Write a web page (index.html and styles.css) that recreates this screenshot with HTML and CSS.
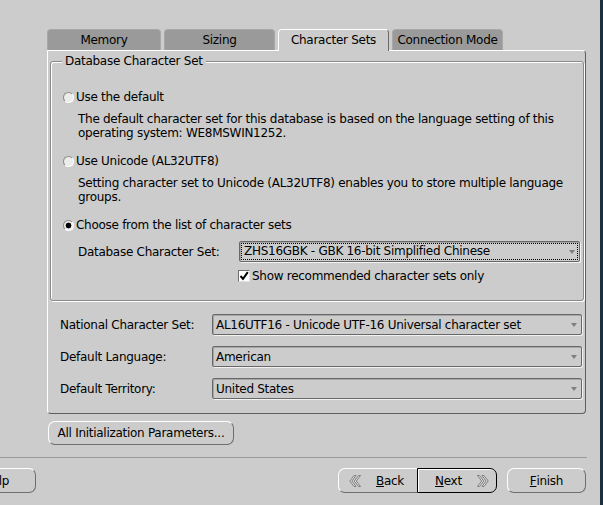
FILE: index.html
```html
<!DOCTYPE html>
<html>
<head>
<meta charset="utf-8">
<link rel="stylesheet" href="styles.css">
</head>
<body>
<div class="screen">
  <div class="window">
    <div class="tabs">
      <div class="tab tab-wide">Memory</div>
      <div class="tab">Sizing</div>
      <div class="tab active">Character Sets</div>
      <div class="tab">Connection Mode</div>
    </div>
    <div class="panel">
      <div class="group">
        <div class="group-title">Database Character Set</div>
        <div class="option opt-first"><span class="radio"></span>Use the default</div>
        <p class="desc">The default character set for this database is based on the language setting of this<br>operating system: WE8MSWIN1252.</p>
        <div class="option"><span class="radio"></span>Use Unicode (AL32UTF8)</div>
        <p class="desc">Setting character set to Unicode (AL32UTF8) enables you to store multiple language<br>groups.</p>
        <div class="option"><span class="radio checked"></span>Choose from the list of character sets</div>
        <div class="field db-field">
          <span class="field-label db-label">Database Character Set:</span>
          <div class="combo db-combo"><div class="focus-ring"><span class="combo-text">ZHS16GBK - GBK 16-bit Simplified Chinese</span><span class="arrow"></span></div></div>
        </div>
        <div class="check-row">
          <span class="checkbox"><svg width="10" height="10" viewBox="0 0 10 10"><path d="M1.5 5 L4 7.8 L8.8 1.2" stroke="#000" stroke-width="2" fill="none"/></svg></span>Show recommended character sets only
        </div>
      </div>
      <div class="form">
        <div class="field">
          <span class="field-label">National Character Set:</span>
          <div class="combo"><span class="combo-text">AL16UTF16 - Unicode UTF-16 Universal character set</span><span class="arrow"></span></div>
        </div>
        <div class="field">
          <span class="field-label">Default Language:</span>
          <div class="combo"><span class="combo-text">American</span><span class="arrow"></span></div>
        </div>
        <div class="field">
          <span class="field-label">Default Territory:</span>
          <div class="combo"><span class="combo-text">United States</span><span class="arrow"></span></div>
        </div>
      </div>
    </div>
    <button class="btn init-btn">All Initialization Parameters...</button>
    <div class="separator"></div>
    <div class="nav">
      <button class="btn help-btn"><u>H</u>elp</button>
      <div class="spacer"></div>
      <div class="pair">
        <button class="btn back-btn">
          <svg class="chev" width="12" height="12" viewBox="0 0 12 12"><path d="M5 0.5 L7 0.5 L2.8 6 L7 11.5 L5 11.5 L0.8 6 Z M9.5 0.5 L11.5 0.5 L7.3 6 L11.5 11.5 L9.5 11.5 L5.3 6 Z" fill="#e6e6e6" stroke="#7c7c7c" stroke-width="1" stroke-linejoin="round"/></svg>
          <span class="btn-label"><u>B</u>ack</span>
        </button>
        <button class="btn next-btn">
          <span class="btn-label"><u>N</u>ext</span>
          <svg class="chev" width="12" height="12" viewBox="0 0 12 12"><path d="M2.5 0.5 L0.5 0.5 L4.7 6 L0.5 11.5 L2.5 11.5 L6.7 6 Z M7 0.5 L5 0.5 L9.2 6 L5 11.5 L7 11.5 L11.2 6 Z" fill="#e6e6e6" stroke="#7c7c7c" stroke-width="1" stroke-linejoin="round"/></svg>
        </button>
      </div>
      <button class="btn finish-btn"><u>F</u>inish</button>
    </div>
  </div>
  <div class="edge"></div>
</div>
</body>
</html>
```
FILE: styles.css
```css
html, body {
  margin: 0;
  padding: 0;
  background: #cccccc;
}
body {
  font-family: "DejaVu Sans", sans-serif;
  font-size: 12px;
  letter-spacing: -0.28px;
  color: #000;
  line-height: 14px;
}
.screen {
  display: flex;
  width: 603px;
  height: 505px;
  overflow: hidden;
}
.window {
  width: 600px;
  flex: none;
  background: #cccccc;
  padding-top: 29px;
  box-sizing: border-box;
}
.edge {
  width: 3px;
  flex: none;
  background: #1d2f3c;
}

/* Tabs */
.tabs {
  display: flex;
  align-items: flex-start;
  gap: 3px;
  margin-left: 47px;
  height: 21px;
}
.tab {
  box-sizing: border-box;
  width: 111px;
  height: 21px;
  background: #9a9a9a;
  border: 1px solid #a8a8a8;
  border-bottom: none;
  border-radius: 4px 4px 0 0;
  text-align: center;
  line-height: 21px;
}
.tab-wide { width: 114px; }
.tab.active {
  height: 22px;
  background: #cccccc;
  border-color: #ffffff #6a6a6a #cccccc #ffffff;
  position: relative;
  z-index: 1;
}

/* Panel */
.panel {
  box-sizing: border-box;
  margin-left: 47px;
  width: 539px;
  height: 364px;
  border: 1px solid;
  border-color: #ffffff #5e5e5e #5e5e5e #ffffff;
  border-radius: 0 4px 4px 4px;
  padding: 10px 2px 0 2px;
}

/* Group box */
.group {
  box-sizing: border-box;
  width: 534px;
  height: 240px;
  border: 1px solid #8a8a8a;
  border-radius: 3px;
  box-shadow: inset 1px 1px 0 #ffffff, 1px 1px 0 #ffffff;
}
.group-title {
  display: table;
  margin: -8px 0 0 11px;
  padding: 0 3px;
  background: #cccccc;
  height: 14px;
}
.option {
  display: flex;
  align-items: center;
  margin: 14px 0 0 12px;
  height: 14px;
}
.opt-first { margin-top: 22px; }
.radio {
  box-sizing: border-box;
  width: 11px;
  height: 11px;
  border-radius: 50%;
  border: 1px solid;
  border-color: #8a8a8a #ffffff #ffffff #8a8a8a;
  background: #ececec;
  margin-right: 2px;
  flex: none;
}
.radio.checked {
  background: radial-gradient(circle, #000 0 2.6px, #ececec 3.2px);
}
.desc {
  margin: 8px 0 0 27px;
}
.field {
  display: flex;
  align-items: center;
  height: 21px;
  margin-left: 10px;
}
.db-field {
  margin: 9px 0 0 27px;
}
.field-label {
  width: 152px;
  flex: none;
}
.db-label { width: 161px; }
.combo {
  box-sizing: border-box;
  display: flex;
  align-items: center;
  width: 370px;
  height: 21px;
  border: 1px solid #686868;
  border-radius: 2px;
  box-shadow: inset 1px 1px 0 #a6a6a6, 1px 1px 0 #f2f2f2;
  padding: 0 4px 0 3px;
}
.db-combo {
  width: 341px;
  padding: 0 1px 0 1px;
}
.combo-text {
  flex: 1;
}
.focus-ring {
  flex: 1;
  display: flex;
  align-items: center;
  box-sizing: border-box;
  height: 17px;
  line-height: 15px;
  border: 1px dotted #000;
  padding: 0 2px 0 2px;
}
.arrow {
  width: 0;
  height: 0;
  border-left: 3.5px solid transparent;
  border-right: 3.5px solid transparent;
  border-top: 4px solid #7e7e7e;
  flex: none;
}
.check-row {
  display: flex;
  align-items: center;
  margin: 7px 0 0 187px;
  height: 14px;
}
.checkbox {
  box-sizing: border-box;
  width: 12px;
  height: 12px;
  background: #ffffff;
  border: 1px solid;
  border-color: #6e6e6e #e0e0e0 #e0e0e0 #6e6e6e;
  display: flex;
  align-items: center;
  justify-content: center;
  margin-right: 2px;
  flex: none;
}
.form {
  display: flex;
  flex-direction: column;
  gap: 11px;
  margin-top: 13px;
}

/* Buttons */
.btn {
  box-sizing: border-box;
  font: inherit;
  letter-spacing: inherit;
  color: #000;
  background: #cccccc;
  border: 1px solid;
  border-color: #ffffff #6e6e6e #6e6e6e #ffffff;
  border-radius: 7px;
  padding: 0;
  margin: 0;
  display: flex;
  align-items: center;
  justify-content: center;
}
.init-btn {
  margin: 7px 0 0 48px;
  width: 186px;
  height: 24px;
}
.separator {
  margin-top: 12px;
  width: 587px;
  height: 1px;
  background: #9a9a9a;
}
.nav {
  display: flex;
  align-items: flex-start;
  margin-top: 10px;
  height: 25px;
}
.help-btn {
  width: 80px;
  height: 25px;
  margin-left: -44px;
}
.spacer { flex: 1; }
.pair {
  display: flex;
}
.back-btn {
  width: 79px;
  height: 25px;
  border-radius: 7px 0 0 7px;
  border-right: none;
  justify-content: flex-start;
  padding-left: 10px;
}
.back-btn .btn-label { margin-left: 15px; }
.next-btn {
  width: 80px;
  height: 25px;
  border: 1px solid #000;
  border-radius: 0 7px 7px 0;
  box-shadow: inset 1px 1px 0 #ffffff;
  justify-content: flex-start;
  padding-left: 17px;
}
.next-btn .chev { margin-left: 15px; }
.finish-btn {
  width: 79px;
  height: 25px;
  margin: 0 14px 0 10px;
}
.chev { flex: none; }
```
